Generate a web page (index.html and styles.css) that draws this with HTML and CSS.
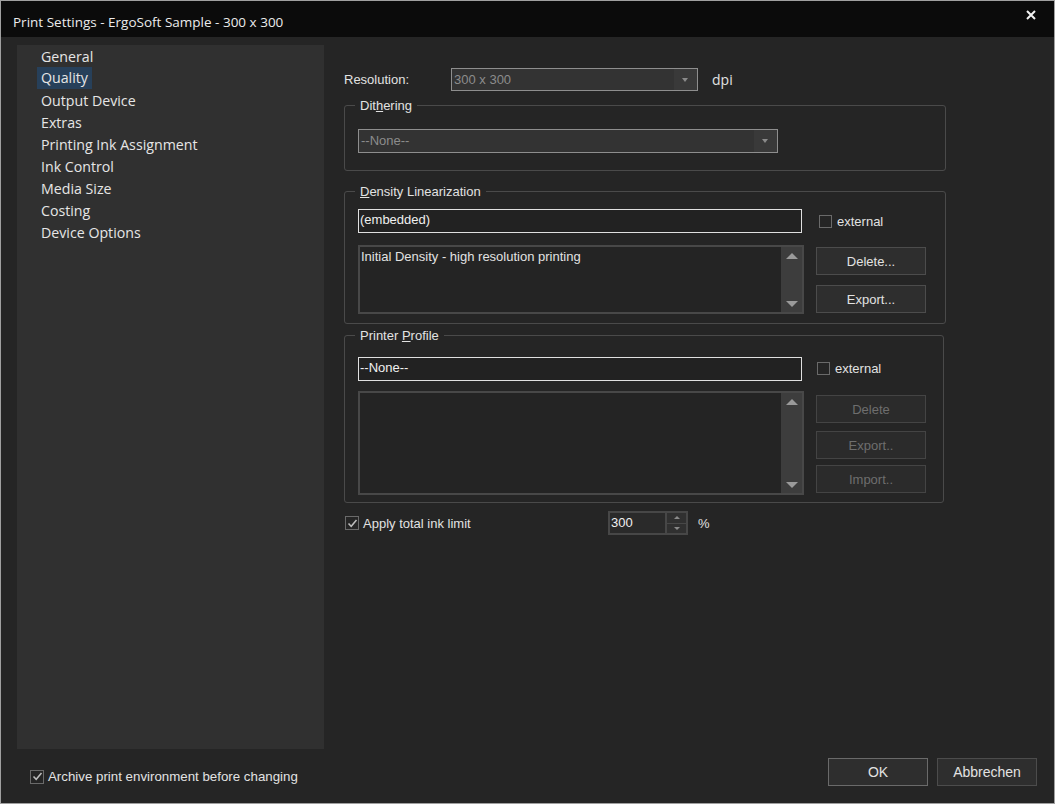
FILE: index.html
```html
<!DOCTYPE html>
<html lang="en">
  <head>
    <meta charset="UTF-8" />
    <title>Print Settings</title>
    <link rel="stylesheet" href="styles.css">
  </head>
  <body>
    <div class="window">
      <div class="titlebar">
        <span class="title">Print Settings - ErgoSoft Sample - 300 x 300</span>
        <svg class="close" width="10" height="10" viewBox="0 0 10 10">
          <path d="M1 1 L9 9 M9 1 L1 9" stroke="#f2f2f2" stroke-width="2" />
        </svg>
      </div>

      <div class="main">
        <div class="left">
          <ul class="nav">
            <li><span>General</span></li>
            <li class="active"><span>Quality</span></li>
            <li><span>Output Device</span></li>
            <li><span>Extras</span></li>
            <li><span>Printing Ink Assignment</span></li>
            <li><span>Ink Control</span></li>
            <li><span>Media Size</span></li>
            <li><span>Costing</span></li>
            <li><span>Device Options</span></li>
          </ul>
          <div class="check archive">
            <span class="box checked">
              <svg width="11" height="11" viewBox="0 0 11 11"><path d="M1.5 5.5 L4.2 8.3 L9.5 2" fill="none" stroke="#bdbdbd" stroke-width="1.5" /></svg>
            </span>
            Archive print environment before changing
          </div>
        </div>

        <div class="right">
          <div class="content">
            <div class="res-row">
              <span class="res-label">Resolution:</span>
              <div class="combo res-combo">
                <span class="combo-text">300 x 300</span>
                <span class="combo-arrow"></span>
              </div>
              <span class="dpi">dpi</span>
            </div>

            <fieldset class="group dither">
              <legend>Dit<u>h</u>ering</legend>
              <div class="group-body">
                <div class="combo dither-combo">
                  <span class="combo-text">--None--</span>
                  <span class="combo-arrow"></span>
                </div>
              </div>
            </fieldset>

            <fieldset class="group density">
              <legend><u>D</u>ensity Linearization</legend>
              <div class="group-body list-body">
                <div class="textbox">(embedded)</div>
                <div class="check ext"><span class="box"></span>external</div>
                <div class="listbox">
                  <div class="list-items">Initial Density - high resolution printing</div>
                  <div class="scroll"><span class="up"></span><span class="down"></span></div>
                </div>
                <div class="btn-col dens-btns">
                  <button class="btn">Delete...</button>
                  <button class="btn">Export...</button>
                </div>
              </div>
            </fieldset>

            <fieldset class="group profile">
              <legend>Printer <u>P</u>rofile</legend>
              <div class="group-body list-body">
                <div class="textbox">--None--</div>
                <div class="check ext ext-profile"><span class="box"></span>external</div>
                <div class="listbox">
                  <div class="list-items"></div>
                  <div class="scroll"><span class="up"></span><span class="down"></span></div>
                </div>
                <div class="btn-col prof-btns">
                  <button class="btn" disabled>Delete</button>
                  <button class="btn" disabled>Export..</button>
                  <button class="btn" disabled>Import..</button>
                </div>
              </div>
            </fieldset>

            <div class="ink-row">
              <div class="check ink">
                <span class="box checked">
                  <svg width="11" height="11" viewBox="0 0 11 11"><path d="M1.5 5.5 L4.2 8.3 L9.5 2" fill="none" stroke="#bdbdbd" stroke-width="1.5" /></svg>
                </span>
                Apply total ink limit
              </div>
              <div class="spin">
                <span class="spin-value">300</span>
                <span class="spin-btns"><span class="s-up"></span><span class="s-down"></span></span>
              </div>
              <span class="pct">%</span>
            </div>
          </div>

          <div class="actions">
            <button class="btn dlg default">OK</button>
            <button class="btn dlg">Abbrechen</button>
          </div>
        </div>
      </div>
    </div>
  </body>
</html>
```

FILE: styles.css
```css
* {
  box-sizing: border-box;
}
body {
  margin: 0;
  background: #252525;
  font-family: "Liberation Sans", Arial, sans-serif;
  font-size: 13px;
  color: #e2e2e2;
}
.window {
  width: 1055px;
  height: 804px;
  border: 1px solid #a0a0a0;
  background: #252525;
  display: flex;
  flex-direction: column;
}
.titlebar {
  height: 36px;
  background: #0b0b0b;
  display: flex;
  align-items: center;
  justify-content: space-between;
  padding: 0 18px 0 12px;
}
.title {
  font-family: "Open Sans", sans-serif;
  font-size: 13.5px;
  color: #ececec;
  padding-top: 6px;
}
.close {
  margin-top: -8px;
}
.main {
  flex: 1;
  display: flex;
}

/* left column */
.left {
  width: 323px;
  padding: 8px 0 0 16px;
}
.nav {
  list-style: none;
  margin: 0;
  padding: 1px 0 0 20px;
  height: 704px;
  background: #303030;
  font-family: "Open Sans", sans-serif;
  font-size: 14.2px;
}
.nav li {
  height: 22px;
  line-height: 22px;
  color: #e6e6e6;
}
.nav li span {
  display: inline-block;
  padding: 0 4px;
}
.nav li.active span {
  background: #27405a;
  position: relative;
  top: -1px;
}
.check {
  display: flex;
  align-items: center;
}
.box {
  width: 13px;
  height: 13px;
  border: 1px solid #6a6a6a;
  margin-right: 5px;
  display: flex;
  align-items: center;
  justify-content: center;
}
.box.checked {
  width: 14px;
  height: 14px;
}
.archive {
  margin: 20px 0 0 13px;
  font-size: 13.3px;
}
.archive .box {
  margin-right: 4px;
}

/* right column */
.right {
  flex: 1;
  display: flex;
  flex-direction: column;
  padding-left: 20px;
}
.content {
  padding-top: 31px;
}
.res-row {
  display: flex;
  align-items: center;
  height: 23px;
}
.res-label {
  width: 107px;
}
.combo {
  display: flex;
  border: 1px solid #8e8e8e;
  background: #333333;
  color: #8c8c8c;
}
.combo-text {
  flex: 1;
  padding-left: 2px;
  line-height: 21px;
}
.combo-arrow {
  width: 23px;
  background: #393939;
  position: relative;
}
.combo-arrow::after {
  content: "";
  position: absolute;
  left: 8px;
  top: 9px;
  border-left: 3.5px solid transparent;
  border-right: 3.5px solid transparent;
  border-top: 4px solid #8a8a8a;
}
.res-combo {
  width: 247px;
  height: 23px;
}
.dpi {
  margin-left: 14px;
  font-family: "Open Sans", sans-serif;
  font-size: 14px;
}

.group {
  margin: 0;
  padding: 0;
  width: 602px;
  border: 1px solid #4a4a4a;
  border-radius: 3px;
}
.group legend {
  margin-left: 10px;
  padding: 0 5px;
  height: 16px;
  line-height: 16px;
  font-size: 13px;
  position: relative;
  top: 1px;
}
.group-body {
  padding: 16px 13px 17px 13px;
}
.dither {
  margin-top: 6px;
}
.dither-combo {
  width: 420px;
  height: 24px;
}
.density {
  margin-top: 12px;
}
.profile {
  margin-top: 3px;
  width: 600px;
}
.list-body {
  display: grid;
  grid-template-columns: 446px 110px;
  grid-template-rows: 24px 69px;
  column-gap: 12px;
  row-gap: 12px;
  padding: 10px 13px 9px 13px;
}
.profile .list-body {
  grid-template-rows: 24px 104px;
  row-gap: 10px;
  padding-top: 14px;
  padding-bottom: 7px;
}
.textbox {
  width: 444px;
  height: 24px;
  border: 1px solid #e0e0e0;
  background: #222222;
  padding-left: 1px;
  line-height: 20px;
  color: #f0f0f0;
}
.ext {
  margin-left: 3px;
}
.ext-profile {
  margin-left: 1px;
  margin-top: -2px;
}
.listbox {
  display: flex;
  border: 2px solid #484848;
  background: #242424;
}
.list-items {
  flex: 1;
  padding: 1px 1px;
  line-height: 17px;
}
.scroll {
  width: 21px;
  background: #3d3d3d;
  display: flex;
  flex-direction: column;
  justify-content: space-between;
  align-items: center;
  padding: 6px 0 5px 0;
}
.scroll .up {
  border-left: 6px solid transparent;
  border-right: 6px solid transparent;
  border-bottom: 6px solid #9a9a9a;
}
.scroll .down {
  border-left: 6px solid transparent;
  border-right: 6px solid transparent;
  border-top: 6px solid #9a9a9a;
}
.btn-col {
  display: flex;
  flex-direction: column;
}
.dens-btns {
  padding-top: 2px;
  gap: 10px;
}
.prof-btns {
  padding-top: 4px;
}
.prof-btns .btn:nth-child(2) {
  margin-top: 8px;
}
.prof-btns .btn:nth-child(3) {
  margin-top: 6px;
}
.btn {
  width: 110px;
  height: 28px;
  background: #2e2e2e;
  border: 1px solid #4c4c4c;
  color: #e2e2e2;
  font-family: "Liberation Sans", Arial, sans-serif;
  font-size: 13px;
  padding: 0;
}
.btn:disabled {
  color: #6e6e6e;
  border-color: #444444;
  background: #2b2b2b;
}

.ink-row {
  display: flex;
  align-items: center;
  margin-top: 8px;
  height: 24px;
}
.ink {
  width: 264px;
  padding-left: 1px;
}
.ink .box {
  margin-right: 4px;
}
.spin {
  display: flex;
  width: 80px;
  height: 24px;
  border: 2px solid #474747;
  background: #2a2a2a;
}
.spin-value {
  flex: 1;
  padding-left: 1px;
  line-height: 19px;
  color: #f0f0f0;
}
.spin-btns {
  width: 21px;
  display: flex;
  flex-direction: column;
  border-left: 2px solid #474747;
  background: #303030;
}
.spin-btns span {
  flex: 1;
  position: relative;
}
.spin-btns .s-up {
  border-bottom: 1px solid #474747;
}
.spin-btns .s-up::after,
.spin-btns .s-down::after {
  content: "";
  position: absolute;
  left: 7px;
  top: 3px;
  border-left: 3px solid transparent;
  border-right: 3px solid transparent;
}
.spin-btns .s-up::after {
  border-bottom: 3px solid #8a8a8a;
}
.spin-btns .s-down::after {
  border-top: 3px solid #8a8a8a;
}
.pct {
  margin-left: 10px;
}

.actions {
  margin-top: auto;
  display: flex;
  justify-content: flex-end;
  gap: 9px;
  padding: 0 17px 17px 0;
}
.dlg {
  width: 100px;
  font-size: 14px;
}
.default {
  border-color: #6a6a6a;
}
```
